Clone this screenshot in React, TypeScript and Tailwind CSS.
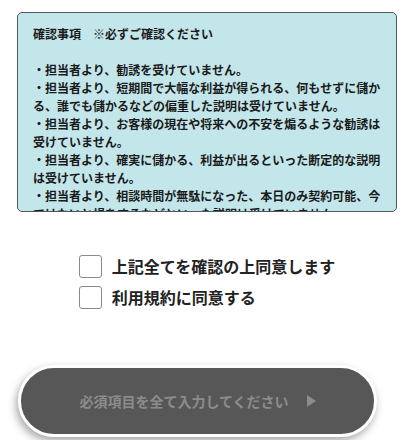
const items = [
  '・担当者より、勧誘を受けていません。',
  '・担当者より、短期間で大幅な利益が得られる、何もせずに儲かる、誰でも儲かるなどの偏重した説明は受けていません。',
  '・担当者より、お客様の現在や将来への不安を煽るような勧誘は受けていません。',
  '・担当者より、確実に儲かる、利益が出るといった断定的な説明は受けていません。',
  '・担当者より、相談時間が無駄になった、本日のみ契約可能、今ではないと損をするなどといった説明は受けていません。',
];

function Check({ label }: { label: string }) {
  return (
    <label className="flex items-center gap-[10px]">
      <span className="w-[23px] h-[23px] rounded-[3px] border border-[#8a8a8a] bg-white" />
      <span className="text-[16px] font-bold text-[#222]">{label}</span>
    </label>
  );
}

export default function App() {
  return (
    <div
      className="w-[414px] h-[440px] bg-white overflow-hidden"
      style={{ fontFamily: '"Noto Sans CJK JP", sans-serif' }}
    >
      <div className="pt-[12px] px-[17px]">
        <div className="h-[200px] overflow-hidden rounded-[5px] border border-[#4e5a5c] bg-[#c3e6ea] pl-[15px] pr-[15px] pt-[12px]">
          <div className="text-[12px] leading-[18px] font-bold text-[#1a1a1a]">
            <p>確認事項　※必ずご確認ください</p>
            <p>&nbsp;</p>
            {items.map((t) => (
              <p key={t}>{t}</p>
            ))}
          </div>
        </div>
      </div>

      <div className="flex justify-center mt-[42px]">
        <div className="flex flex-col gap-[7px]">
          <Check label="上記全てを確認の上同意します" />
          <Check label="利用規約に同意する" />
        </div>
      </div>

      <div className="mt-[56px] pl-[18px]">
        <button className="w-[359px] h-[72px] rounded-full border-[3px] border-white bg-[#575757] shadow-[-2px_4px_8px_rgba(0,0,0,0.35)] flex items-center justify-center gap-[18px]">
          <span className="text-[14px] font-bold text-[#8c8c8c]">必須項目を全て入力してください</span>
          <svg width="9" height="12" viewBox="0 0 9 12">
            <path d="M0 0L9 6L0 12Z" fill="#8c8c8c" />
          </svg>
        </button>
      </div>
    </div>
  );
}
